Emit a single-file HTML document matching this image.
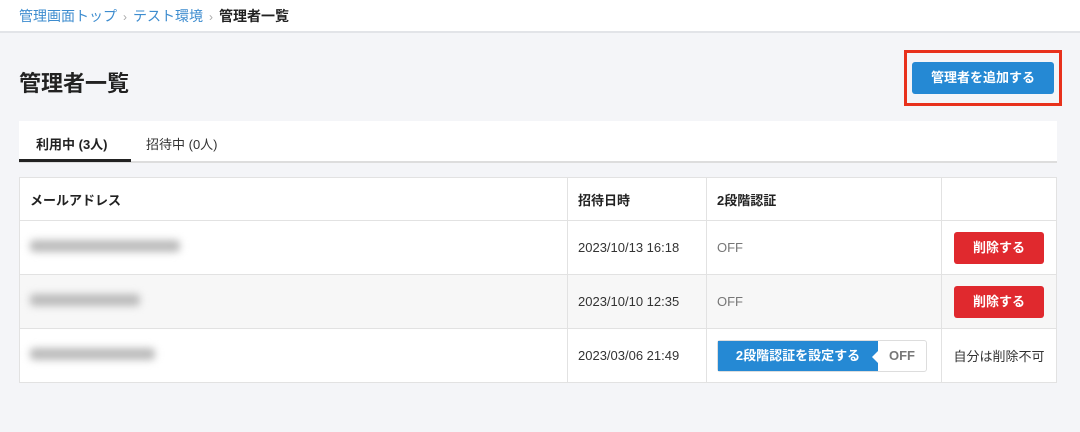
<!DOCTYPE html><html><head><meta charset="utf-8"><style>
*{box-sizing:border-box;margin:0;padding:0}
body{width:1080px;height:432px;background:#f4f5f8;font-family:"Liberation Sans","Noto Sans CJK JP",sans-serif;position:relative;overflow:hidden;color:#333}
.hdr{position:absolute;left:0;top:0;width:1080px;height:33px;background:#fff;border-bottom:2px solid #e2e4e8;font-size:14px;padding:6px 19px;color:#3d8ccf}
.hdr .s{color:#aaa;margin:0 6px;font-size:12px}
.hdr b{color:#222}
h1{position:absolute;left:19px;top:66px;font-size:22px;font-weight:bold;color:#222}
.add{position:absolute;left:904px;top:50px;width:158px;height:56px;border:3px solid #e8311c}
.add div{position:absolute;left:5px;top:9px;width:142px;height:32px;background:#2589d4;border-radius:3px;color:#fff;font-size:13px;font-weight:bold;text-align:center;line-height:32px}
.tabs{position:absolute;left:19px;top:121px;width:1038px;height:42px;background:#fff;border-bottom:2px solid #ddd;font-size:13px}
.tabs span{position:absolute;top:13px}
.tabs .a{left:17px;font-weight:bold;color:#222}
.tabs .u{position:absolute;left:0;top:38px;width:112px;height:3px;background:#222}
table{position:absolute;left:19px;top:177px;width:1038px;border-collapse:collapse;background:#fff;font-size:13px;border:1px solid #ddd}
td{border:1px solid #e2e2e2;padding:0 10px;height:54px;color:#333}
tr:first-child td{height:43px;font-weight:bold;color:#222}
tr.g td{background:#f7f7f7}
.off{color:#777}
.del{display:inline-block;width:90px;height:32px;background:#e0292e;color:#fff;font-weight:bold;text-align:center;line-height:32px;border-radius:3px}
.bl{display:inline-block;height:12px;background:#bbb;filter:blur(4px);border-radius:4px}
.tw{display:flex;height:32px;border:1px solid #ddd;border-radius:3px;width:210px;font-weight:bold}
.tw .b{background:#2589d4;color:#fff;width:160px;text-align:center;line-height:30px;position:relative}
.tw .b:after{content:"";position:absolute;right:0;top:10px;border:6px solid transparent;border-right-color:#fff}
.tw .o{flex:1;text-align:center;line-height:30px;color:#777}
</style></head><body>
<div class="hdr">管理画面トップ<span class="s">›</span>テスト環境<span class="s">›</span><b>管理者一覧</b></div>
<h1>管理者一覧</h1>
<div class="add"><div>管理者を追加する</div></div>
<div class="tabs"><span class="a">利用中 (3人)</span><span style="left:127px">招待中 (0人)</span><div class="u"></div></div>
<table>
<tr><td style="width:548px">メールアドレス</td><td style="width:139px">招待日時</td><td style="width:235px">2段階認証</td><td></td></tr>
<tr><td><span class="bl" style="width:150px"></span></td><td>2023/10/13 16:18</td><td class="off">OFF</td><td style="text-align:center"><span class="del">削除する</span></td></tr>
<tr class="g"><td><span class="bl" style="width:110px"></span></td><td>2023/10/10 12:35</td><td class="off">OFF</td><td style="text-align:center"><span class="del">削除する</span></td></tr>
<tr><td><span class="bl" style="width:125px"></span></td><td>2023/03/06 21:49</td><td><div class="tw"><div class="b">2段階認証を設定する</div><div class="o">OFF</div></div></td><td style="text-align:center">自分は削除不可</td></tr>
</table>
</body></html>
